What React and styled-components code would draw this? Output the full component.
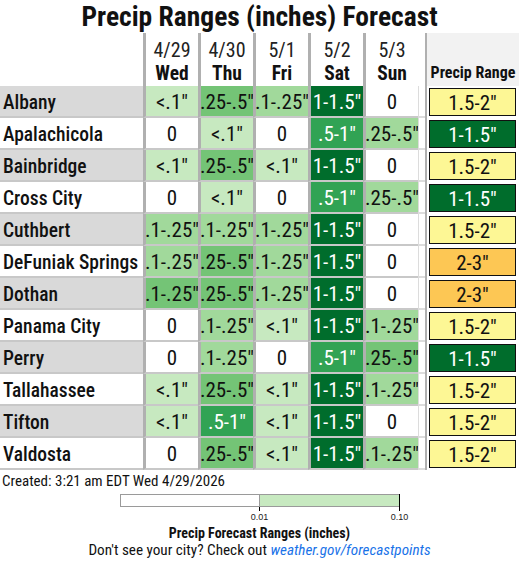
import React from "react"
import styled, { createGlobalStyle } from "styled-components"

const GlobalStyle = createGlobalStyle`
  body {
    margin: 0;
    background: #fff;
    font-family: "Roboto Condensed", "Liberation Sans Narrow", Roboto, "Liberation Sans", sans-serif;
    font-stretch: condensed;
    color: #111;
  }
`

const COLS = "143px repeat(5, 55px) 7px 94px"

const SHADES = {
  w: { bg: "#ffffff", fg: "#111" },
  a: { bg: "#c7e9c0", fg: "#111" },
  b: { bg: "#a1d99b", fg: "#111" },
  c: { bg: "#74c476", fg: "#111" },
  d: { bg: "#31a354", fg: "#fff" },
  e: { bg: "#006d2c", fg: "#fff" },
}

const RANGE = {
  "1.5-2\"": { bg: "#fdf795", fg: "#111" },
  "1-1.5\"": { bg: "#006d2c", fg: "#fff" },
  "2-3\"": { bg: "#fdc754", fg: "#111" },
}

const days = [
  { date: "4/29", day: "Wed" },
  { date: "4/30", day: "Thu" },
  { date: "5/1", day: "Fri" },
  { date: "5/2", day: "Sat" },
  { date: "5/3", day: "Sun" },
]

const cities = [
  { name: "Albany", vals: [["<.1\"", "a"], [".25-.5\"", "c"], [".1-.25\"", "b"], ["1-1.5\"", "e"], ["0", "w"]], range: "1.5-2\"" },
  { name: "Apalachicola", vals: [["0", "w"], ["<.1\"", "a"], ["0", "w"], [".5-1\"", "d"], [".25-.5\"", "b"]], range: "1-1.5\"" },
  { name: "Bainbridge", vals: [["<.1\"", "a"], [".25-.5\"", "c"], ["<.1\"", "a"], ["1-1.5\"", "e"], ["0", "w"]], range: "1.5-2\"" },
  { name: "Cross City", vals: [["0", "w"], ["<.1\"", "a"], ["0", "w"], [".5-1\"", "d"], [".25-.5\"", "b"]], range: "1-1.5\"" },
  { name: "Cuthbert", vals: [[".1-.25\"", "b"], [".1-.25\"", "b"], [".1-.25\"", "b"], ["1-1.5\"", "e"], ["0", "w"]], range: "1.5-2\"" },
  { name: "DeFuniak Springs", vals: [[".1-.25\"", "b"], [".25-.5\"", "c"], [".1-.25\"", "b"], ["1-1.5\"", "e"], ["0", "w"]], range: "2-3\"" },
  { name: "Dothan", vals: [[".1-.25\"", "c"], [".25-.5\"", "c"], [".1-.25\"", "b"], ["1-1.5\"", "e"], ["0", "w"]], range: "2-3\"" },
  { name: "Panama City", vals: [["0", "w"], [".1-.25\"", "b"], ["<.1\"", "a"], ["1-1.5\"", "e"], [".1-.25\"", "b"]], range: "1.5-2\"" },
  { name: "Perry", vals: [["0", "w"], [".1-.25\"", "b"], ["0", "w"], [".5-1\"", "d"], [".25-.5\"", "c"]], range: "1-1.5\"" },
  { name: "Tallahassee", vals: [["<.1\"", "a"], [".25-.5\"", "c"], ["<.1\"", "a"], ["1-1.5\"", "e"], [".1-.25\"", "b"]], range: "1.5-2\"" },
  { name: "Tifton", vals: [["<.1\"", "a"], [".5-1\"", "d"], ["<.1\"", "a"], ["1-1.5\"", "e"], ["0", "w"]], range: "1.5-2\"" },
  { name: "Valdosta", vals: [["0", "w"], [".25-.5\"", "c"], ["<.1\"", "a"], ["1-1.5\"", "e"], [".1-.25\"", "b"]], range: "1.5-2\"" },
]

const Page = styled.div`
  width: 519px;
  display: flex;
  flex-direction: column;
`

const Title = styled.h1`
  margin: 0;
  height: 34px;
  font-size: 27.5px;
  line-height: 33px;
  font-weight: 700;
  text-align: center;
  white-space: nowrap;
`

const HeaderRow = styled.div`
  display: grid;
  grid-template-columns: ${COLS};
  height: 53px;
  margin-top: -1px;
`

const DayHead = styled.div`
  display: flex;
  flex-direction: column;
  align-items: center;
  justify-content: center;
  gap: 2px;
  border-left: 3px solid #b0b0b0;
  padding-top: 4px;
`

const DateText = styled.span`
  font-size: 20px;
  line-height: 22px;
  color: #222;
`

const DayText = styled.span`
  font-size: 19.5px;
  line-height: 22px;
  font-weight: 700;
`

const RangeHead = styled.div`
  background: #f2f2f2;
  border-left: 2px solid #b0b0b0;
  display: flex;
  align-items: flex-end;
  justify-content: center;
  padding-bottom: 4px;
  font-size: 16px;
  font-weight: 700;
  white-space: nowrap;
`

const Row = styled.div`
  display: grid;
  grid-template-columns: ${COLS};
  height: 32px;
`

const NameCell = styled.div`
  background: ${p => (p.$shaded ? "#d9d9d9" : "#fff")};
  border-bottom: 2px solid #c8c8c8;
  display: flex;
  align-items: center;
  padding: 2px 0 0 3px;
  font-size: 19.5px;
  font-weight: 500;
  white-space: nowrap;
`

const ValueCell = styled.div`
  background: ${p => SHADES[p.$shade].bg};
  color: ${p => SHADES[p.$shade].fg};
  border-left: 3px solid #b0b0b0;
  border-bottom: 2px solid #c8c8c8;
  display: flex;
  align-items: center;
  justify-content: center;
  padding-top: 2px;
  font-size: 21px;
  white-space: nowrap;
`

const GapCell = styled.div`
  border-left: 1px solid #dcdcdc;
  border-bottom: 2px solid #dcdcdc;
`

const RangeCell = styled.div`
  border-left: 2px solid #b0b0b0;
  padding: 2px 3px 2px 2px;
  display: flex;
`

const RangeBox = styled.div`
  flex: 1;
  background: ${p => RANGE[p.$range].bg};
  color: ${p => RANGE[p.$range].fg};
  border: 1px solid #111;
  display: flex;
  align-items: center;
  justify-content: center;
  padding-top: 1px;
  font-size: 21px;
`

const Footer = styled.div`
  display: flex;
  flex-direction: column;
  padding-top: 2px;
`

const Created = styled.div`
  font-size: 15px;
  line-height: 18px;
  padding-left: 2px;
`

const Legend = styled.div`
  width: 280px;
  margin: 4px auto 0;
  display: flex;
  flex-direction: column;
  align-items: stretch;
`

const Bar = styled.div`
  display: flex;
  height: 13px;
`

const Segment = styled.div`
  flex: 1;
  position: relative;
  background: ${p => p.$fill};
  border: 1px solid #9a9a9a;
  &:first-child {
    border-right: none;
  }
  &::after {
    content: "";
    position: absolute;
    right: -1px;
    top: -1px;
    width: 1px;
    height: 17px;
    background: #000;
  }
`

const Ticks = styled.div`
  display: flex;
  margin-top: 5px;
  height: 11px;
`

const Tick = styled.div`
  flex: 1;
  display: flex;
  justify-content: flex-end;
  font-family: "Liberation Sans", Arial, sans-serif;
  font-size: 9px;
  line-height: 11px;
  color: #222;
  span {
    transform: translateX(50%);
  }
`

const LegendTitle = styled.div`
  text-align: center;
  font-size: 14px;
  font-weight: 700;
  line-height: 16px;
  margin-top: 2px;
  white-space: nowrap;
`

const Note = styled.div`
  text-align: center;
  font-size: 15.2px;
  line-height: 18px;
  white-space: nowrap;
`

const Link = styled.a`
  color: #1a73e8;
  font-style: italic;
  text-decoration: none;
`

const App = () => {
  return (
    <>
      <GlobalStyle />
      <Page>
        <Title>Precip Ranges (inches) Forecast</Title>
        <HeaderRow>
          <div />
          {days.map(d => (
            <DayHead key={d.date}>
              <DateText>{d.date}</DateText>
              <DayText>{d.day}</DayText>
            </DayHead>
          ))}
          <div />
          <RangeHead>Precip Range</RangeHead>
        </HeaderRow>
        {cities.map((c, i) => (
          <Row key={c.name}>
            <NameCell $shaded={i % 2 === 0}>{c.name}</NameCell>
            {c.vals.map(([text, shade], j) => (
              <ValueCell key={j} $shade={shade}>
                {text}
              </ValueCell>
            ))}
            <GapCell />
            <RangeCell>
              <RangeBox $range={c.range}>{c.range}</RangeBox>
            </RangeCell>
          </Row>
        ))}
        <Footer>
          <Created>Created: 3:21 am EDT Wed 4/29/2026</Created>
          <Legend>
            <Bar>
              <Segment $fill="#fff" />
              <Segment $fill="#c7e9c0" />
            </Bar>
            <Ticks>
              <Tick>
                <span>0.01</span>
              </Tick>
              <Tick>
                <span>0.10</span>
              </Tick>
            </Ticks>
            <LegendTitle>Precip Forecast Ranges (inches)</LegendTitle>
          </Legend>
          <Note>
            Don't see your city? Check out{" "}
            <Link href="#">weather.gov/forecastpoints</Link>
          </Note>
        </Footer>
      </Page>
    </>
  )
}

export default App
